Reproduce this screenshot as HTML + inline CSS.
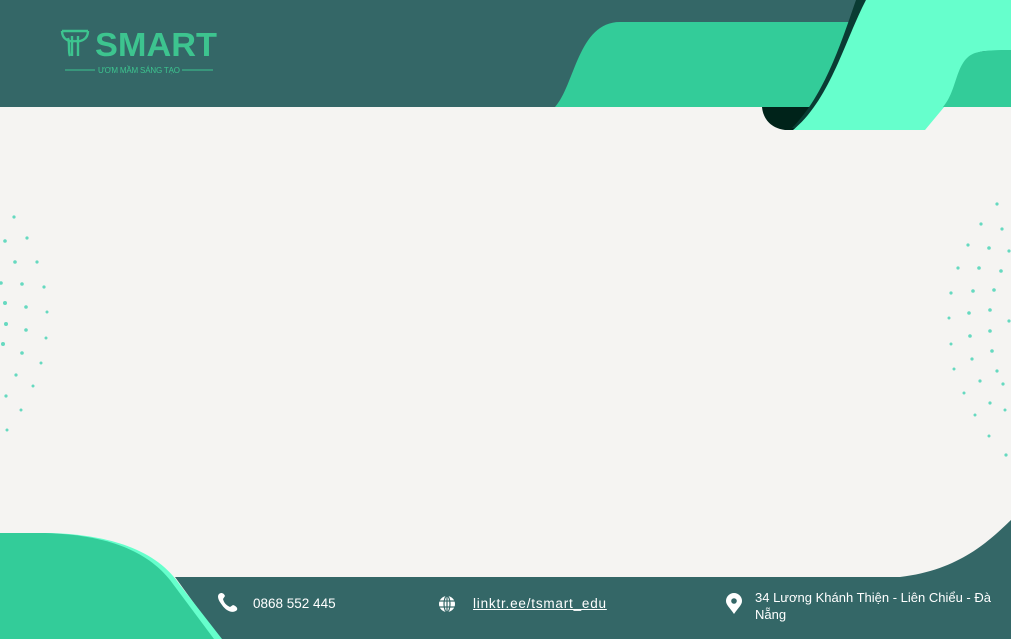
<!DOCTYPE html>
<html><head><meta charset="utf-8"><style>
body{margin:0;width:1011px;height:639px;overflow:hidden;background:#f5f4f2;font-family:"Liberation Sans",sans-serif;position:relative}
svg{position:absolute;left:0;top:0}
.t{position:absolute;color:#fff;font-size:13px}
</style></head><body>
<svg width="1011" height="639" viewBox="0 0 1011 639">
<rect x="0" y="0" width="1011" height="107" fill="#346767"/>
<path d="M555 107 C575 85 578 22 620 22 L860 22 L860 107 Z" fill="#33cc99"/>
<path d="M762 107 L830 107 L800 130 L785 130 C770 128 763 118 762 107Z" fill="#00231a"/>
<path d="M856 0 L866 0 C850 40 835 90 800 128 L792 128 C825 95 842 40 856 0Z" fill="#0a3b33"/>
<path d="M866 0 L1011 0 L1011 50 L985 51 C955 55 962 80 950 100 L925 130 L793 130 C830 100 845 40 866 0Z" fill="#66ffcc"/>
<path d="M943 107 C958 90 955 60 975 53 C985 50 1000 50 1011 50 L1011 107Z" fill="#33cc99"/>
<path d="M175 577 L900 577 C960 570 990 540 1011 520 L1011 639 L220 639 Z" fill="#346767"/>
<path d="M0 533 L50 533 C120 535 160 555 180 585 L222 639 L0 639Z" fill="#66ffcc"/>
<path d="M0 533 L45 533 C115 535 150 555 170 580 L214 639 L0 639Z" fill="#33cc99"/>
<g fill="#66d9c0">
<circle cx="14" cy="217" r="1.6"/><circle cx="5" cy="241" r="1.8"/><circle cx="27" cy="238" r="1.6"/><circle cx="15" cy="262" r="1.8"/><circle cx="37" cy="262" r="1.6"/><circle cx="1" cy="283" r="1.8"/><circle cx="22" cy="284" r="1.8"/><circle cx="44" cy="287" r="1.6"/><circle cx="5" cy="303" r="2"/><circle cx="26" cy="307" r="1.8"/><circle cx="47" cy="312" r="1.5"/><circle cx="6" cy="324" r="2"/><circle cx="26" cy="330" r="1.8"/><circle cx="46" cy="338" r="1.5"/><circle cx="3" cy="344" r="2"/><circle cx="22" cy="353" r="1.8"/><circle cx="41" cy="363" r="1.5"/><circle cx="16" cy="375" r="1.6"/><circle cx="33" cy="386" r="1.5"/><circle cx="6" cy="396" r="1.6"/><circle cx="21" cy="410" r="1.5"/><circle cx="7" cy="430" r="1.5"/>
<circle cx="997" cy="204" r="1.6"/><circle cx="981" cy="224" r="1.6"/><circle cx="1002" cy="229" r="1.6"/><circle cx="968" cy="245" r="1.6"/><circle cx="989" cy="248" r="1.8"/><circle cx="1009" cy="251" r="1.6"/><circle cx="958" cy="268" r="1.6"/><circle cx="979" cy="268" r="1.8"/><circle cx="1001" cy="271" r="1.8"/><circle cx="951" cy="293" r="1.6"/><circle cx="973" cy="291" r="1.8"/><circle cx="994" cy="290" r="1.8"/><circle cx="949" cy="318" r="1.5"/><circle cx="969" cy="313" r="1.8"/><circle cx="990" cy="310" r="1.8"/><circle cx="1009" cy="321" r="1.6"/><circle cx="951" cy="344" r="1.5"/><circle cx="970" cy="336" r="1.8"/><circle cx="990" cy="331" r="1.8"/><circle cx="992" cy="351" r="1.8"/><circle cx="954" cy="369" r="1.5"/><circle cx="972" cy="359" r="1.6"/><circle cx="997" cy="371" r="1.6"/><circle cx="964" cy="393" r="1.5"/><circle cx="980" cy="381" r="1.6"/><circle cx="1003" cy="384" r="1.6"/><circle cx="975" cy="415" r="1.5"/><circle cx="990" cy="403" r="1.6"/><circle cx="1005" cy="410" r="1.5"/><circle cx="989" cy="436" r="1.5"/><circle cx="1006" cy="455" r="1.6"/>
</g>
<g fill="none" stroke="#3dc48f" stroke-width="2.4">
<path d="M62 31 C62 40 70 42 75 41 M88 31 C88 40 80 42 75 41 M62 31 L88 31"/>
<path d="M72 36 L72 56 M78 36 L78 56 M68 38 C70 44 68 52 70 56"/>
</g>
<line x1="65" y1="70" x2="95" y2="70" stroke="#3dc48f" stroke-width="1"/>
<line x1="182" y1="70" x2="213" y2="70" stroke="#3dc48f" stroke-width="1"/>
<text x="95" y="56" font-family="Liberation Sans" font-weight="bold" font-size="33" fill="#3dc48f" textLength="122" lengthAdjust="spacingAndGlyphs">SMART</text>
<text x="98" y="73" font-family="Liberation Sans" font-size="8" fill="#3dc48f" textLength="82">ƯƠM MẦM SÁNG TẠO</text>
<path d="M219 594 C221 592 224 593 225 596 L223 599 C224 603 226 605 230 607 L233 605 C236 606 238 608 237 610 C233 614 226 611 222 605 C218 600 217 596 219 594Z" fill="#fff"/>
<circle cx="447" cy="604" r="8" fill="#fff"/>
<g stroke="#346767" stroke-width="1.2" fill="none"><ellipse cx="447" cy="604" rx="3" ry="8"/><line x1="439" y1="601" x2="455" y2="601"/><line x1="439" y1="607" x2="455" y2="607"/><line x1="447" y1="596" x2="447" y2="612"/></g>
<path d="M734 614 C730 608 726 605 726 601 A8 8 0 0 1 742 601 C742 605 738 608 734 614Z" fill="#fff"/>
<circle cx="734" cy="601" r="2.8" fill="#346767"/>
</svg>
<div class="t" style="left:253px;top:596px;font-size:13.5px">0868 552 445</div>
<div class="t" style="left:473px;top:596px;text-decoration:underline;font-size:13.5px;letter-spacing:0.8px">linktr.ee/tsmart_edu</div>
<div class="t" style="left:755px;top:589px;width:245px;line-height:17px">34 Lương Khánh Thiện - Liên Chiểu - Đà Nẵng</div>
</body></html>
